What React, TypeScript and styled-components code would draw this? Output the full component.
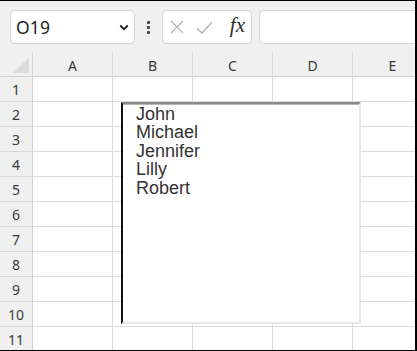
import React from 'react'
import styled, { createGlobalStyle } from 'styled-components'

const GlobalStyle = createGlobalStyle`
  body {
    margin: 0;
    background: #ffffff;
    font-family: "Noto Sans", "Open Sans", sans-serif;
  }
`

const Frame = styled.div`
  background: #f0f0f0;
  border-bottom: 1px solid #000;
  border-right: 2px solid #000;
  border-top: 1px solid #000;
  box-sizing: border-box;
  display: flex;
  flex-direction: column;
  height: 351px;
  overflow: hidden;
  width: 417px;
`
const TopBar = styled.div`
  align-items: flex-start;
  box-sizing: border-box;
  display: flex;
  flex: 0 0 51px;
  padding: 9px 0 0 10px;
`
const Box = styled.div`
  align-items: center;
  background: #ffffff;
  border: 1px solid #d6d6d6;
  border-radius: 5px;
  box-sizing: border-box;
  display: flex;
  flex-shrink: 0;
  height: 34px;
`
const NameBox = styled(Box)`
  justify-content: space-between;
  padding: 0 5px 0 5px;
  width: 125px;
`
const NameText = styled.span`
  color: #1f1f1f;
  font-size: 17.5px;
  letter-spacing: 0.2px;
`
const Dots = styled.div`
  align-items: center;
  display: flex;
  flex-direction: column;
  gap: 2px;
  height: 34px;
  justify-content: center;
  width: 27px;
`
const Dot = styled.span`
  background: #444;
  border-radius: 1px;
  height: 3px;
  width: 3px;
`
const FormulaButtons = styled(Box)`
  gap: 12px;
  padding: 0 6px 0 7px;
  width: 90px;
`
const Fx = styled.span`
  color: #2b2b2b;
  font-family: "Liberation Serif", serif;
  font-size: 21px;
  font-style: italic;
  margin-left: auto;
  margin-top: -3px;
`
const FormulaInput = styled(Box)`
  border-right: none;
  border-radius: 5px 0 0 5px;
  flex: 1;
  margin-left: 7px;
`

const Sheet = styled.div`
  background: #ffffff;
  display: grid;
  grid-auto-rows: 25px;
  grid-template-columns: 33px repeat(5, 80px);
  position: relative;
`
const HeaderCell = styled.div`
  align-items: center;
  background: #f0f0f0;
  border-bottom: 1px solid #d2d2d2;
  border-right: 1px solid #dadada;
  box-sizing: border-box;
  color: #3a3a3a;
  display: flex;
  font-size: 14px;
  justify-content: center;
  padding-top: 3px;
`
const Corner = styled(HeaderCell)`
  border-right-color: #d2d2d2;
  position: relative;
`
const Triangle = styled.div`
  background: #dcdcdc;
  bottom: 3px;
  clip-path: polygon(100% 0, 100% 100%, 0 100%);
  height: 16px;
  position: absolute;
  right: 3px;
  width: 16px;
`
const RowHeader = styled.div`
  align-items: center;
  background: #f0f0f0;
  border-bottom: 1px solid #dadada;
  border-right: 1px solid #d2d2d2;
  box-sizing: border-box;
  color: #3a3a3a;
  display: flex;
  font-size: 14px;
  justify-content: center;
`
const Cell = styled.div`
  border-bottom: 1px solid #dcdcdc;
  border-right: 1px solid #dcdcdc;
  box-sizing: border-box;
`

const ListBox = styled.div`
  background: #ffffff;
  border-bottom: 2px solid #e6e6e6;
  border-left: 2px solid #111;
  border-right: 2px solid #e6e6e6;
  border-top: 2px solid #8a8a8a;
  box-shadow: inset 0 1px 0 #b5b5b5;
  box-sizing: border-box;
  height: 222px;
  left: 121px;
  padding: 1px 0 0 13px;
  position: absolute;
  top: 50px;
  width: 240px;
`
const ListItem = styled.div`
  color: #333333;
  font-family: "Liberation Sans", Arial, sans-serif;
  font-size: 18px;
  line-height: 18.4px;
`

const columns = ['A', 'B', 'C', 'D', 'E']
const rows = Array.from({ length: 11 }, (_, i) => i + 1)
const names = ['John', 'Michael', 'Jennifer', 'Lilly', 'Robert']

export default function App() {
  return (
    <>
      <GlobalStyle />
      <Frame>
        <TopBar>
          <NameBox>
            <NameText>O19</NameText>
            <svg width="10" height="7" viewBox="0 0 10 7">
              <path d="M1.2 1.5 L5 5.2 L8.8 1.5" fill="none" stroke="#222" strokeWidth="1.8" />
            </svg>
          </NameBox>
          <Dots>
            <Dot />
            <Dot />
            <Dot />
          </Dots>
          <FormulaButtons>
            <svg width="14" height="14" viewBox="0 0 14 14">
              <path d="M1 1 L13 13 M13 1 L1 13" stroke="#b4b4b4" strokeWidth="1.3" fill="none" />
            </svg>
            <svg width="17" height="13" viewBox="0 0 17 13">
              <path d="M1 7 L6 12 L16 1" stroke="#b4b4b4" strokeWidth="1.3" fill="none" />
            </svg>
            <Fx>fx</Fx>
          </FormulaButtons>
          <FormulaInput />
        </TopBar>
        <Sheet>
          <Corner>
            <Triangle />
          </Corner>
          {columns.map((c) => (
            <HeaderCell key={c}>{c}</HeaderCell>
          ))}
          {rows.map((r) => (
            <React.Fragment key={r}>
              <RowHeader>{r}</RowHeader>
              {columns.map((c) => (
                <Cell key={c} />
              ))}
            </React.Fragment>
          ))}
          <ListBox>
            {names.map((n) => (
              <ListItem key={n}>{n}</ListItem>
            ))}
          </ListBox>
        </Sheet>
      </Frame>
    </>
  )
}
